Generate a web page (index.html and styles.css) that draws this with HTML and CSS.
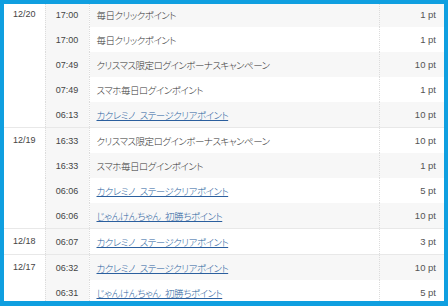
FILE: index.html
```html
<!DOCTYPE html>
<html lang="ja">
<head>
<meta charset="utf-8">
<link rel="stylesheet" href="styles.css">
</head>
<body>
<div class="frame">
  <div class="panel">
    <table class="log">
      <colgroup>
        <col class="c-date"><col class="c-time"><col class="c-desc"><col class="c-pt">
      </colgroup>
      <tbody class="grp">
        <tr class="odd"><td class="date" rowspan="5">12/20</td><td class="time">17:00</td><td class="desc">毎日クリックポイント</td><td class="pt">1 pt</td></tr>
        <tr><td class="time">17:00</td><td class="desc">毎日クリックポイント</td><td class="pt">1 pt</td></tr>
        <tr class="odd"><td class="time">07:49</td><td class="desc">クリスマス限定ログインボーナスキャンペーン</td><td class="pt">10 pt</td></tr>
        <tr><td class="time">07:49</td><td class="desc">スマホ毎日ログインポイント</td><td class="pt">1 pt</td></tr>
        <tr class="odd last"><td class="time">06:13</td><td class="desc"><a href="#">カクレミノ ステージクリアポイント</a></td><td class="pt">10 pt</td></tr>
      </tbody>
      <tbody class="grp">
        <tr><td class="date" rowspan="4">12/19</td><td class="time">16:33</td><td class="desc">クリスマス限定ログインボーナスキャンペーン</td><td class="pt">10 pt</td></tr>
        <tr class="odd"><td class="time">16:33</td><td class="desc">スマホ毎日ログインポイント</td><td class="pt">1 pt</td></tr>
        <tr><td class="time">06:06</td><td class="desc"><a href="#">カクレミノ ステージクリアポイント</a></td><td class="pt">5 pt</td></tr>
        <tr class="odd last"><td class="time">06:06</td><td class="desc"><a href="#">じゃんけんちゃん 初勝ちポイント</a></td><td class="pt">10 pt</td></tr>
      </tbody>
      <tbody class="grp">
        <tr class="last"><td class="date">12/18</td><td class="time">06:07</td><td class="desc"><a href="#">カクレミノ ステージクリアポイント</a></td><td class="pt">3 pt</td></tr>
      </tbody>
      <tbody class="grp">
        <tr class="odd"><td class="date" rowspan="2">12/17</td><td class="time">06:32</td><td class="desc"><a href="#">カクレミノ ステージクリアポイント</a></td><td class="pt">10 pt</td></tr>
        <tr><td class="time">06:31</td><td class="desc"><a href="#">じゃんけんちゃん 初勝ちポイント</a></td><td class="pt">5 pt</td></tr>
      </tbody>
    </table>
  </div>
</div>
</body>
</html>
```
FILE: styles.css
```css
html, body {
  margin: 0;
  padding: 0;
}
body {
  background: #0f9fe0;
  width: 448px;
  height: 306px;
  overflow: hidden;
}
.frame {
  padding: 4px 4px 5px 4px;
}
.panel {
  background: #fff;
  height: 297px;
  overflow: hidden;
}
.log {
  border-collapse: collapse;
  table-layout: fixed;
  width: 440px;
  margin-top: -2px;
  font-family: "Noto Sans CJK JP", sans-serif;
  font-feature-settings: "palt";
}
.c-date { width: 41px; }
.c-time { width: 44px; }
.c-desc { width: 290px; }
.c-pt { width: 65px; }
.log td {
  height: 25px;
  padding: 0;
  vertical-align: middle;
  white-space: nowrap;
}
.log tr.odd td { background: #f7f7f7; }
.log tr.last td { border-bottom: 1px solid #e8e8e8; }
.log td.date {
  background: #fff !important;
  vertical-align: top;
  padding-top: 7px;
  height: auto;
  text-align: center;
  font-family: "Liberation Sans", sans-serif;
  font-size: 9px;
  color: #444;
  border-right: 1px dotted #dcdcdc;
  border-bottom: 1px solid #e8e8e8;
  box-sizing: border-box;
}
.log td.time {
  background: #f7f7f7 !important;
  text-align: center;
  font-family: "Liberation Sans", sans-serif;
  font-size: 9px;
  color: #444;
  border-right: 1px dotted #dcdcdc;
}
.log td.desc {
  padding-left: 7px;
  font-size: 9.5px;
  font-weight: 300;
  letter-spacing: -0.5px;
  word-spacing: 3px;
  color: #333;
  overflow: hidden;
}
.log td.desc a {
  color: #2b5f9e;
  text-decoration: underline;
}
.log td.pt {
  text-align: right;
  padding-right: 8px;
  font-family: "Liberation Sans", sans-serif;
  font-size: 9.5px;
  color: #555;
  border-left: 1px dotted #dcdcdc;
}
```
